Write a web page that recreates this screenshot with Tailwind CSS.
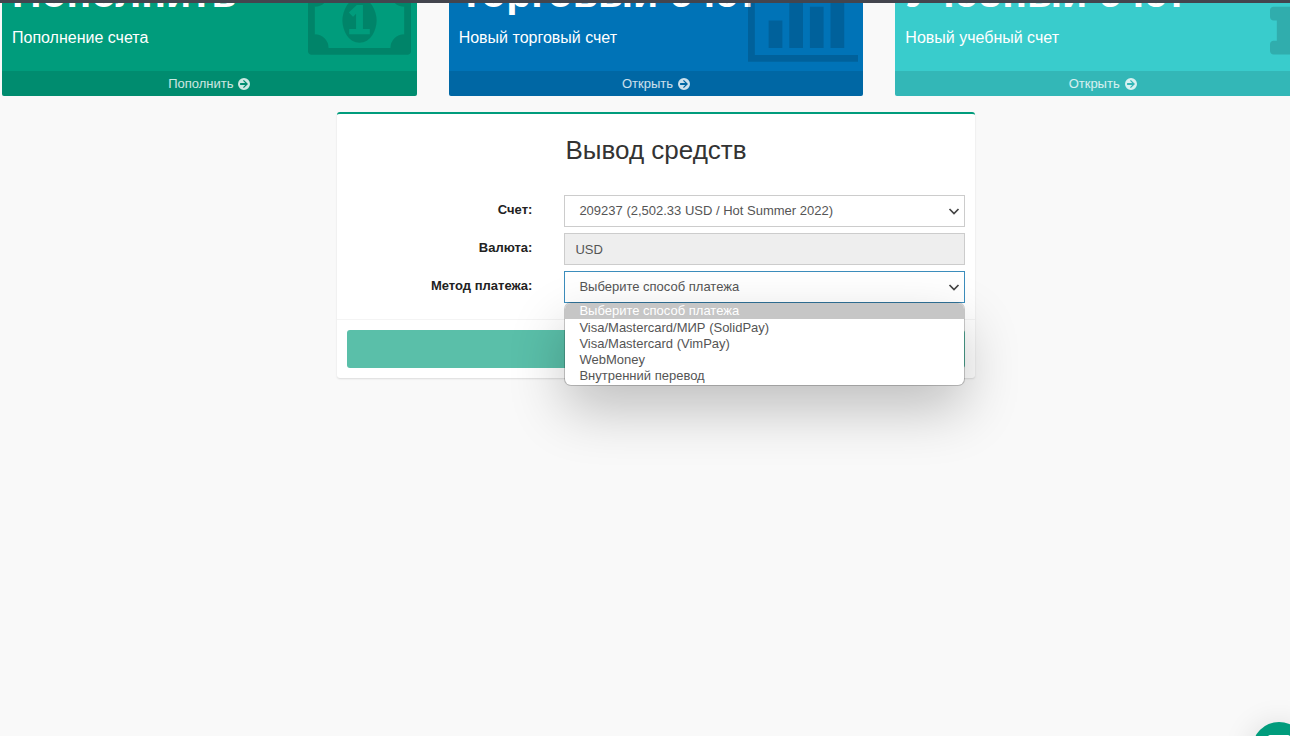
<!DOCTYPE html>
<html lang="ru">
  <head>
    <meta charset="UTF-8" />
    <meta name="viewport" content="width=device-width, initial-scale=1.0" />
    <title>Вывод средств</title>
    <script src="https://cdn.jsdelivr.net/npm/@tailwindcss/browser@4"></script>
  </head>
  <body class="min-h-screen overflow-hidden bg-[#f9f9f9] font-['Liberation_Sans',Arial,sans-serif] text-[#333]">
    <header class="h-[3px] bg-[#43454e]"></header>

    <main class="ml-[2px] -mr-5">
      <!-- account boxes -->
      <section class="overflow-hidden">
        <div class="-mt-[41px] grid grid-cols-3 gap-8">
          <article class="relative overflow-hidden rounded-xs bg-[#009c7c] text-white">
            <div class="px-[10px] pt-[10px] pb-[22px]">
              <h3 class="mb-[13px] text-[41px] leading-[42px] font-bold whitespace-nowrap">Пополнить</h3>
              <p class="text-base leading-[22px]">Пополнение счета</p>
            </div>
            <svg class="absolute right-[6px] bottom-[41px] h-[69px] w-[103px] fill-black/15" viewBox="0 64 1920 1280" aria-hidden="true">
              <path d="M768 960h384v-96h-128v-448h-114l-148 137 77 80q42-37 55-57h2v288h-128v96zm512-256q0 70-21 142t-59.500 134-101.500 101-138 39-138-39-101.500-101-59.500-134-21-142 21-142 59.500-134 101.500-101 138-39 138 39 101.500 101 59.500 134 21 142zm512 256v-512q-106 0-181-75t-75-181h-1152q0 106-75 181t-181 75v512q106 0 181 75t75 181h1152q0-106 75-181t181-75zm128-832v1152q0 26-19 45t-45 19h-1792q-26 0-45-19t-19-45v-1152q0-26 19-45t45-19h1792q26 0 45 19t19 45z" />
            </svg>
            <a href="#" class="flex h-[25px] items-center justify-center gap-[5px] bg-black/10 text-[13px] text-white/80">
              Пополнить
              <svg class="size-3 fill-current" viewBox="0 0 12 12" aria-hidden="true">
                <path fill-rule="evenodd" d="M6 0a6 6 0 1 1 0 12A6 6 0 0 1 6 0zM5.900 1.900 5 2.800 7.200 5H2.100v2h5.100L5 9.200l.9.900L10 6z" />
              </svg>
            </a>
          </article>

          <article class="relative overflow-hidden rounded-xs bg-[#0073b7] text-white">
            <div class="px-[10px] pt-[10px] pb-[22px]">
              <h3 class="mb-[13px] text-[41px] leading-[42px] font-bold whitespace-nowrap">Торговый счет</h3>
              <p class="text-base leading-[22px]">Новый торговый счет</p>
            </div>
            <svg class="absolute right-[5px] bottom-[34px] h-[83px] w-[110px] fill-black/15" viewBox="0 128 2048 1536" aria-hidden="true">
              <path d="M640 896v512h-256v-512h256zm384-512v1024h-256v-1024h256zm1024 1152v128h-2048v-1536h128v1408h1920zm-640-896v768h-256v-768h256zm384-384v1152h-256v-1152h256z" />
            </svg>
            <a href="#" class="flex h-[25px] items-center justify-center gap-[5px] bg-black/10 text-[13px] text-white/80">
              Открыть
              <svg class="size-3 fill-current" viewBox="0 0 12 12" aria-hidden="true">
                <path fill-rule="evenodd" d="M6 0a6 6 0 1 1 0 12A6 6 0 0 1 6 0zM5.900 1.900 5 2.800 7.200 5H2.100v2h5.100L5 9.200l.9.900L10 6z" />
              </svg>
            </a>
          </article>

          <article class="relative overflow-hidden rounded-xs bg-[#39cccc] text-white">
            <div class="px-[10px] pt-[10px] pb-[22px]">
              <h3 class="mb-[13px] text-[41px] leading-[42px] font-bold whitespace-nowrap">Учебный счет</h3>
              <p class="text-base leading-[22px]">Новый учебный счет</p>
            </div>
            <svg class="absolute right-[6px] bottom-[41px] h-[76px] w-[34px] fill-black/15" viewBox="576 128 640 1408" aria-hidden="true">
              <path d="M1216 1344v128q0 26-19 45t-45 19h-512q-26 0-45-19t-19-45v-128q0-26 19-45t45-19h64v-384h-64q-26 0-45-19t-19-45v-128q0-26 19-45t45-19h384q26 0 45 19t19 45v576h64q26 0 45 19t19 45zm-128-1152v192q0 26-19 45t-45 19h-256q-26 0-45-19t-19-45v-192q0-26 19-45t45-19h256q26 0 45 19t19 45z" />
            </svg>
            <a href="#" class="flex h-[25px] items-center justify-center gap-[5px] bg-black/10 text-[13px] text-white/80">
              Открыть
              <svg class="size-3 fill-current" viewBox="0 0 12 12" aria-hidden="true">
                <path fill-rule="evenodd" d="M6 0a6 6 0 1 1 0 12A6 6 0 0 1 6 0zM5.900 1.900 5 2.800 7.200 5H2.100v2h5.100L5 9.200l.9.900L10 6z" />
              </svg>
            </a>
          </article>
        </div>
      </section>

      <!-- withdrawal form -->
      <div class="mx-auto mt-4 w-1/2 px-2">
        <form class="rounded-[3px] border-t-2 border-[#009c7c] bg-white shadow-[0_1px_2px_rgba(0,0,0,0.12)]">
          <div class="px-[10px] pt-5 pb-4">
            <h2 class="mb-[29px] text-center text-[26px] leading-8">Вывод средств</h2>

            <div class="flex flex-col gap-[6px] text-[13px]">
              <div class="flex gap-8">
                <label for="account" class="w-[30%] pt-[6px] text-right leading-[18px] font-bold text-[#222]">Счет:</label>
                <div class="relative flex-1">
                  <select id="account" class="h-8 w-full appearance-none border border-[#ccc] bg-white px-[14px] text-[#555]">
                    <option>209237 (2,502.33 USD / Hot Summer 2022)</option>
                  </select>
                  <svg class="pointer-events-none absolute top-3 right-[5px] h-2 w-3 fill-none stroke-[#444]" viewBox="0 0 12 8" aria-hidden="true">
                    <path stroke-width="1.700" d="M1.500 2 6 6.500 10.500 2" />
                  </svg>
                </div>
              </div>

              <div class="flex gap-8">
                <label for="currency" class="w-[30%] pt-[6px] text-right leading-[18px] font-bold text-[#222]">Валюта:</label>
                <div class="flex-1">
                  <input id="currency" type="text" value="USD" readonly class="block h-8 w-full border border-[#ccc] bg-[#eee] px-[10px] text-[#555]" />
                </div>
              </div>

              <div class="flex gap-8">
                <label for="method" class="w-[30%] pt-[6px] text-right leading-[18px] font-bold text-[#222]">Метод платежа:</label>
                <div class="relative flex-1">
                  <select id="method" class="h-8 w-full appearance-none border border-[#3c8dbc] bg-white px-[14px] text-[#555]">
                    <option>Выберите способ платежа</option>
                  </select>
                  <svg class="pointer-events-none absolute top-3 right-[5px] h-2 w-3 fill-none stroke-[#444]" viewBox="0 0 12 8" aria-hidden="true">
                    <path stroke-width="1.700" d="M1.500 2 6 6.500 10.500 2" />
                  </svg>

                  <ul class="absolute inset-x-px top-full z-10 overflow-hidden rounded-md bg-white pb-px leading-4 text-[#555] shadow-[0_0_0_1px_rgba(0,0,0,0.2),0_24px_56px_rgba(0,0,0,0.24)]">
                    <li class="mb-px bg-[#c6c6c6] px-[14px] text-white">Выберите способ платежа</li>
                    <li class="px-[14px]">Visa/Mastercard/МИР (SolidPay)</li>
                    <li class="px-[14px]">Visa/Mastercard (VimPay)</li>
                    <li class="px-[14px]">WebMoney</li>
                    <li class="px-[14px]">Внутренний перевод</li>
                  </ul>
                </div>
              </div>
            </div>
          </div>

          <div class="border-t border-[#f4f4f4] p-[10px]">
            <button type="submit" aria-label="Вывод средств" class="block h-[38px] w-full rounded-[3px] bg-[#5abfa9]"></button>
          </div>
        </form>
      </div>
    </main>

    <!-- chat -->
    <button type="button" aria-label="Чат" class="fixed -right-4 -bottom-10 flex size-[54px] justify-center rounded-full bg-[#009c7c] pt-[13px] shadow-[0_4px_32px_rgba(0,0,0,0.14)]">
      <svg class="h-6 w-[22px] fill-white" viewBox="0 0 22 24" aria-hidden="true">
        <path d="M2 0h18q2 0 2 2v14q0 2-2 2h-5l-5 5v-5H2q-2 0-2-2V2q0-2 2-2z" />
      </svg>
    </button>
  </body>
</html>
